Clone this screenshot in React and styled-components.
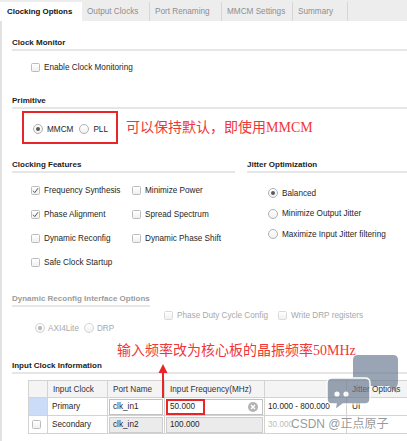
import React from "react";
import styled, { createGlobalStyle } from "styled-components";

const GlobalStyle = createGlobalStyle`
  html, body {
    margin: 0;
    padding: 0;
    background: #fff;
  }
  body {
    font-family: "Liberation Sans", Arial, sans-serif;
    font-size: 8.2px;
    color: #262626;
    overflow: hidden;
  }
`;

const tabs = [
  { label: "Clocking Options", w: 82, active: true },
  { label: "Output Clocks", w: 68 },
  { label: "Port Renaming", w: 72 },
  { label: "MMCM Settings", w: 71 },
  { label: "Summary", w: 55 },
];

const features = [
  { label: "Frequency Synthesis", checked: true },
  { label: "Minimize Power" },
  { label: "Phase Alignment", checked: true },
  { label: "Spread Spectrum" },
  { label: "Dynamic Reconfig" },
  { label: "Dynamic Phase Shift" },
  { label: "Safe Clock Startup" },
];

const jitter = [
  { label: "Balanced", on: true },
  { label: "Minimize Output Jitter" },
  { label: "Maximize Input Jitter filtering" },
];

// Styled Components
const Page = styled.div`
  position: relative;
  width: 407px;
  height: 441px;
  overflow: hidden;
  background: #fff;
`;

const TabBar = styled.div`
  display: flex;
  height: 21px;
  padding-top: 2px;
  box-sizing: border-box;
  background: #ededed;
`;

const Tab = styled.div`
  box-sizing: border-box;
  width: ${(p) => p.$w}px;
  padding-left: ${(p) => (p.$active ? 7 : 5)}px;
  display: flex;
  align-items: center;
  white-space: nowrap;
  background: ${(p) => (p.$active ? "#fff" : "transparent")};
  color: ${(p) => (p.$active ? "#111" : "#8d8d8d")};
  font-weight: ${(p) => (p.$active ? 700 : 400)};
  font-size: ${(p) => (p.$active ? "7.9px" : "8.2px")};
  border-right: ${(p) => (p.$active ? "none" : "1px solid #d6d6d6")};
`;

const Panel = styled.div`
  box-sizing: border-box;
  height: 420px;
  padding: 17px 0 0 10px;
  border-left: 2px solid #e2e2e2;
`;

const Head = styled.div`
  margin-top: ${(p) => p.$mt || 0}px;
  width: ${(p) => (p.$fit ? "fit-content" : "auto")};
  padding-bottom: 1px;
  border-bottom: 2px solid #e6e6e6;
  font-size: 8px;
  font-weight: 700;
  line-height: 10px;
  white-space: nowrap;
  color: ${(p) => (p.$muted ? "#9c9c9c" : "#1c1c1c")};
`;

const Option = styled.div`
  display: flex;
  align-items: center;
  gap: ${(p) => p.$gap ?? 4}px;
  height: 12px;
  white-space: nowrap;
  color: ${(p) => (p.$disabled ? "#a9a9a9" : "#262626")};
`;

const Indent = styled.div`
  display: flex;
  align-items: center;
  gap: ${(p) => p.$gap || 0}px;
  margin: ${(p) => p.$mt || 0}px 0 0 ${(p) => p.$ml || 0}px;
`;

const Box = styled.span`
  box-sizing: border-box;
  flex: none;
  width: 9px;
  height: 9px;
  display: flex;
  align-items: center;
  justify-content: center;
  border: 1px solid ${(p) => (p.$disabled ? "#dadada" : "#bcbcbc")};
  border-radius: 1.5px;
  background: linear-gradient(#ffffff, #f0f0f0);
`;

const Circle = styled.span`
  box-sizing: border-box;
  flex: none;
  width: 10px;
  height: 10px;
  display: flex;
  align-items: center;
  justify-content: center;
  border-radius: 50%;
  border: 1px solid ${(p) => (p.$disabled ? "#d4d4d4" : "#b0b0b0")};
  background: linear-gradient(#ffffff, #f1f1f1);

  &::after {
    content: "";
    display: ${(p) => (p.$on ? "block" : "none")};
    width: 4px;
    height: 4px;
    border-radius: 50%;
    background: ${(p) => (p.$disabled ? "#b5b5b5" : "#5a5a5a")};
  }
`;

const PrimitiveRow = styled.div`
  display: flex;
  align-items: center;
  margin: 2px 0 0 10px;
`;

const RedBox = styled.div`
  box-sizing: border-box;
  width: 96px;
  height: 33px;
  padding: 3px 0 0 9px;
  display: flex;
  align-items: center;
  gap: 6px;
  border: 2px solid #e8262a;
`;

const Note = styled.div`
  margin: ${(p) => p.$mt || 0}px 0 0 ${(p) => p.$ml || 0}px;
  font-family: "Liberation Serif", "Noto Sans CJK SC", serif;
  font-size: 14px;
  line-height: 14px;
  color: #f03636;
  white-space: nowrap;
`;

const Columns = styled.div`
  display: grid;
  grid-template-columns: 223px 1fr;
  column-gap: 12px;
  margin-top: 16px;
`;

const CheckGrid = styled.div`
  display: grid;
  grid-template-columns: 101px auto;
  row-gap: 12px;
  margin: 11px 0 0 19px;
`;

const RadioList = styled.div`
  display: flex;
  flex-direction: column;
  gap: 8.5px;
  margin: 14px 0 0 21px;
`;

const Table = styled.table`
  border-collapse: collapse;
  table-layout: fixed;
  width: 382px;
  margin: 6px 0 0 16px;
`;

const Col = styled.col`
  width: ${(p) => p.$w}px;
`;

const Th = styled.th`
  height: 16px;
  padding: 0 0 0 5px;
  text-align: left;
  font-weight: 400;
  color: #333;
  background: #f4f4f4;
  border: 1px solid #d3d3d3;
  white-space: nowrap;
`;

const Td = styled.td`
  height: 17px;
  padding: 0 0 0 ${(p) => p.$pl ?? 0}px;
  border: 1px solid #d3d3d3;
  background: ${(p) => p.$bg || "#fff"};
  color: ${(p) => (p.$muted ? "#bdbdbd" : "#262626")};
  white-space: nowrap;
`;

const Field = styled.div`
  box-sizing: border-box;
  height: 16px;
  margin: 0 1px;
  padding-left: ${(p) => p.$pl ?? 3}px;
  display: flex;
  align-items: center;
  border: 1px solid ${(p) => (p.$grey ? "#cdcdcd" : "#c2c2c2")};
  background: ${(p) => (p.$grey ? "#ebebeb" : "#fff")};
`;

const RedMark = styled.span`
  box-sizing: border-box;
  width: 39px;
  height: 16px;
  margin-left: -1px;
  padding-left: 2px;
  display: flex;
  align-items: center;
  border: 2px solid #e8262a;
`;

const Clear = styled.span`
  margin: 0 4px 0 auto;
  width: 10px;
  height: 10px;
  border-radius: 50%;
  background: #b3b3b3;
  display: flex;
  align-items: center;
  justify-content: center;
`;

const Arrow = styled.svg`
  position: absolute;
  left: 158px;
  top: 364px;
`;

const Watermark = styled.div`
  position: absolute;
  left: 291px;
  top: 417px;
  font-family: "Liberation Sans", "Noto Sans CJK SC", sans-serif;
  font-size: 12px;
  line-height: 14px;
  color: rgba(125, 125, 125, 0.8);
  text-shadow: 0 0 1px #fff, 0 0 1px #fff;
  white-space: nowrap;
`;

const Logo = styled.svg`
  position: absolute;
  left: 325px;
  top: 350px;
  opacity: 0.68;
`;

const Check = () => (
  <svg width="7" height="7" viewBox="0 0 7 7">
    <path d="M1 3.8 L2.8 5.6 L6 1.2" fill="none" stroke="#555" strokeWidth="1" />
  </svg>
);

const CheckOption = ({ label, checked, disabled }) => (
  <Option $disabled={disabled}>
    <Box $disabled={disabled}>{checked && <Check />}</Box>
    {label}
  </Option>
);

const RadioOption = ({ label, on, disabled, gap }) => (
  <Option $disabled={disabled} $gap={gap}>
    <Circle $on={on} $disabled={disabled} />
    {label}
  </Option>
);

const App = () => {
  return (
    <Page>
      <GlobalStyle />
      <TabBar>
        {tabs.map((t) => (
          <Tab key={t.label} $w={t.w} $active={t.active}>
            {t.label}
          </Tab>
        ))}
      </TabBar>

      <Panel>
        <Head>Clock Monitor</Head>
        <Indent $mt={10} $ml={19}>
          <CheckOption label="Enable Clock Monitoring" />
        </Indent>

        <Head $mt={23}>Primitive</Head>
        <PrimitiveRow>
          <RedBox>
            <RadioOption label="MMCM" on />
            <RadioOption label="PLL" />
          </RedBox>
          <Note $ml={8}>可以保持默认，即使用MMCM</Note>
        </PrimitiveRow>

        <Columns>
          <div>
            <Head>Clocking Features</Head>
            <CheckGrid>
              {features.map((f) => (
                <CheckOption key={f.label} label={f.label} checked={f.checked} />
              ))}
            </CheckGrid>
          </div>
          <div>
            <Head>Jitter Optimization</Head>
            <RadioList>
              {jitter.map((j) => (
                <RadioOption key={j.label} label={j.label} on={j.on} />
              ))}
            </RadioList>
          </div>
        </Columns>

        <Head $mt={26} $fit $muted>
          Dynamic Reconfig Interface Options
        </Head>
        <Indent $mt={2} $ml={152} $gap={10}>
          <CheckOption label="Phase Duty Cycle Config" disabled />
          <CheckOption label="Write DRP registers" disabled />
        </Indent>
        <Indent $mt={1} $ml={23} $gap={5}>
          <RadioOption label="AXI4Lite" on disabled gap={3} />
          <RadioOption label="DRP" disabled gap={3} />
        </Indent>

        <Note $mt={10} $ml={105}>输入频率改为核心板的晶振频率50MHz</Note>

        <Head $mt={3}>Input Clock Information</Head>
        <Table>
          <colgroup>
            <Col $w={19} />
            <Col $w={60} />
            <Col $w={57} />
            <Col $w={100} />
            <Col $w={82} />
            <Col $w={64} />
          </colgroup>
          <thead>
            <tr>
              <Th />
              <Th>Input Clock</Th>
              <Th>Port Name</Th>
              <Th>Input Frequency(MHz)</Th>
              <Th />
              <Th>Jitter Options</Th>
            </tr>
          </thead>
          <tbody>
            <tr>
              <Td $bg="#cadcf8" />
              <Td $pl={4}>Primary</Td>
              <Td>
                <Field>clk_in1</Field>
              </Td>
              <Td>
                <Field $pl={0}>
                  <RedMark>50.000</RedMark>
                  <Clear>
                    <svg width="6" height="6" viewBox="0 0 6 6">
                      <path d="M1 1 L5 5 M5 1 L1 5" stroke="#fff" strokeWidth="1.4" />
                    </svg>
                  </Clear>
                </Field>
              </Td>
              <Td $pl={3}>10.000 - 800.000</Td>
              <Td $pl={5}>UI</Td>
            </tr>
            <tr>
              <Td $pl={3}>
                <Box />
              </Td>
              <Td $pl={4}>Secondary</Td>
              <Td>
                <Field $grey>clk_in2</Field>
              </Td>
              <Td>
                <Field $grey>100.000</Field>
              </Td>
              <Td $pl={3} $muted>
                30.000
              </Td>
              <Td />
            </tr>
          </tbody>
        </Table>
      </Panel>

      <Arrow width="10" height="34" viewBox="0 0 10 34">
        <path d="M5 7 L5 34" stroke="#e8262a" strokeWidth="2" />
        <path d="M0.5 9 L5 0 L9.5 9 Z" fill="#e8262a" />
      </Arrow>

      <Logo width="80" height="80" viewBox="0 0 80 80">
        <path
          d="M33 5 H68 Q73 5 73 10 V31 Q73 36 71 37 L72 43 L64 36 H33 Q28 36 28 31 V10 Q28 5 33 5 Z"
          fill="#6a7a91"
        />
        <path
          d="M7 28 H40 Q45 28 45 33 V49 Q45 54 40 54 H18 L10 60 L11 54 H7 Q2 54 2 49 V33 Q2 28 7 28 Z"
          fill="#6a7a91"
          stroke="#fff"
          strokeWidth="1.5"
        />
        <circle cx="12" cy="44" r="2.6" fill="#fff" />
        <circle cx="21" cy="44" r="2.6" fill="#fff" />
      </Logo>

      <Watermark>CSDN @正点原子</Watermark>
    </Page>
  );
};

export default App;
